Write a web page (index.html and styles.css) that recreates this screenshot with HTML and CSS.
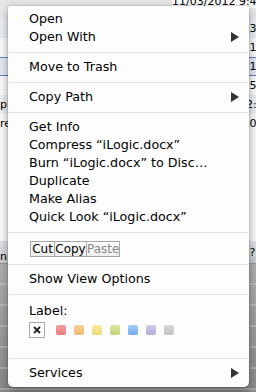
FILE: index.html
```html
<!DOCTYPE html>
<html>
  <head>
    <link rel="stylesheet" href="styles.css">
    <meta charset="utf-8" />
    <title>Finder context menu</title>
  </head>
  <body>
    <div class="finder">
      <div class="row first"><span class="name"></span><span class="date">11/03/2012 9:41 AM</span></div>
      <div class="row"><span class="name"></span><span class="date">11/03/2012 9:38 AM</span></div>
      <div class="row"><span class="name"></span><span class="date">10/03/2012 5:12 PM</span></div>
      <div class="row sel"><span class="name"></span><span class="date">10/03/2012 5:10 PM</span></div>
      <div class="row"><span class="name"></span><span class="date">09/03/2012 4:55 PM</span></div>
      <div class="row"><span class="name">photo.png</span><span class="date">08/03/2012 12:30 PM</span></div>
      <div class="row"><span class="name">readme.rtf</span><span class="date">08/03/2012 5:02 PM</span></div>
      <div class="fill"></div>
      <div class="band"><span class="name">n</span><span class="date">05/03/2012 5:?? PM</span></div>
      <div class="bottom"></div>
    </div>

    <div class="menu">
      <div class="item">Open</div>
      <div class="item">Open With <svg class="arrow" width="8" height="10" viewBox="0 0 8 10"><polygon points="0,0 8,5 0,10"/></svg></div>
      <div class="sep"></div>
      <div class="item">Move to Trash</div>
      <div class="sep"></div>
      <div class="item">Copy Path <svg class="arrow" width="8" height="10" viewBox="0 0 8 10"><polygon points="0,0 8,5 0,10"/></svg></div>
      <div class="sep"></div>
      <div class="item">Get Info</div>
      <div class="item">Compress “iLogic.docx”</div>
      <div class="item">Burn “iLogic.docx” to Disc…</div>
      <div class="item">Duplicate</div>
      <div class="item">Make Alias</div>
      <div class="item">Quick Look “iLogic.docx”</div>
      <div class="sep"></div>
      <div class="edit">
        <span class="btn cut">Cut</span>
        <span class="btn copy">Copy</span>
        <span class="btn paste">Paste</span>
      </div>
      <div class="sep"></div>
      <div class="item">Show View Options</div>
      <div class="sep"></div>
      <div class="labels">
        <div class="label-title">Label:</div>
        <div class="swatches">
          <span class="nolabel"><svg width="14" height="14" viewBox="0 0 14 14"><path d="M4 4 L10 10 M10 4 L4 10"/></svg></span>
          <span class="sw red"></span>
          <span class="sw orange"></span>
          <span class="sw yellow"></span>
          <span class="sw green"></span>
          <span class="sw blue"></span>
          <span class="sw purple"></span>
          <span class="sw grey"></span>
        </div>
      </div>
      <div class="sep"></div>
      <div class="item">Services <svg class="arrow" width="8" height="10" viewBox="0 0 8 10"><polygon points="0,0 8,5 0,10"/></svg></div>
    </div>
  </body>
</html>
```

FILE: styles.css
```css
html,
body {
  margin: 0;
  width: 256px;
  height: 392px;
  overflow: hidden;
}

body {
  position: relative;
  font-family: "DejaVu Sans", "Liberation Sans", sans-serif;
  background: #fff;
  color: #000;
}

/* finder window behind the menu */

.finder {
  display: flex;
  flex-direction: column;
  height: 392px;
}

.row,
.band {
  display: flex;
  align-items: center;
  height: 19px;
  flex-shrink: 0;
  font-size: 11px;
  white-space: nowrap;
  overflow: hidden;
}

.row:nth-child(even) {
  background: #f1f4f8;
}

.row.first {
  align-items: flex-start;
  margin-top: -7px;
  height: 26px;
  background: linear-gradient(#e4e4e4, #eeeeee);
}

.row.first .date {
  padding-top: 2px;
  background: #fff;
}

.row.sel {
  height: 17px;
  border-top: 1px solid #5d86c6;
  border-bottom: 1px solid #5d86c6;
  background: #e8eef8;
}

.name {
  width: 172px;
  flex-shrink: 0;
  overflow: hidden;
}

.fill {
  flex: 1;
  background: #fff;
}

.band {
  height: 22px;
  background: linear-gradient(#e6e8eb, #cdd1d6);
  border-bottom: 1px solid #9a9a9a;
}

.band .name {
  padding-top: 8px;
}

.bottom {
  height: 128px;
  flex-shrink: 0;
  background:
    repeating-linear-gradient(transparent 0 19px, rgba(255, 255, 255, 0.25) 19px 21px),
    linear-gradient(#b4b4b4, #8c8c8c);
}

/* context menu */

.menu {
  position: absolute;
  left: 8px;
  top: 6px;
  width: 241px;
  padding: 4px 0 5px;
  background: #fdfdfd;
  border-radius: 2px 2px 5px 5px;
  box-shadow: 0 4px 12px rgba(0, 0, 0, 0.4), 0 0 0 1px rgba(0, 0, 0, 0.08);
  font-size: 12.7px;
}

.item {
  display: flex;
  justify-content: space-between;
  align-items: center;
  height: 18px;
  line-height: 18px;
  padding: 0 10px 0 21px;
  white-space: nowrap;
}

.arrow {
  fill: #333;
}

.sep {
  height: 1px;
  margin: 6px 1px 5px;
  background: #e2e2e2;
}

.edit {
  display: flex;
  padding: 3px 0 1px 22px;
}

.btn {
  box-sizing: border-box;
  height: 16px;
  line-height: 14px;
  border: 1px solid #a6a6a6;
  background: linear-gradient(#ffffff, #eeeeee);
  font-size: 12px;
  text-align: center;
}

.cut {
  width: 25px;
}

.copy {
  width: 33px;
  margin-left: -1px;
}

.paste {
  width: 34px;
  margin-left: -1px;
  color: #8a8a8a;
}

.labels {
  padding: 2px 0 14px 21px;
}

.label-title {
  height: 18px;
  line-height: 18px;
}

.swatches {
  display: flex;
  align-items: center;
  gap: 8px;
  margin-top: 2px;
  height: 16px;
}

.nolabel {
  box-sizing: border-box;
  width: 16px;
  height: 16px;
  margin-right: 3px;
  border: 1px solid #a9a9a9;
  background: #fff;
  display: flex;
  align-items: center;
  justify-content: center;
}

.nolabel path {
  stroke: #222;
  stroke-width: 1.8;
  fill: none;
}

.sw {
  width: 10px;
  height: 10px;
  border-radius: 2px;
}

.red { background: linear-gradient(#f5a0a0, #ea7b7b); }
.orange { background: linear-gradient(#f7d19a, #efb86e); }
.yellow { background: linear-gradient(#f9eaa2, #f1db7a); }
.green { background: linear-gradient(#dbe6a4, #c4d47c); }
.blue { background: linear-gradient(#a2cdf7, #74acee); }
.purple { background: linear-gradient(#d2c9ec, #b6abd9); }
.grey { background: linear-gradient(#d8d8d8, #c2c2c2); }
```
